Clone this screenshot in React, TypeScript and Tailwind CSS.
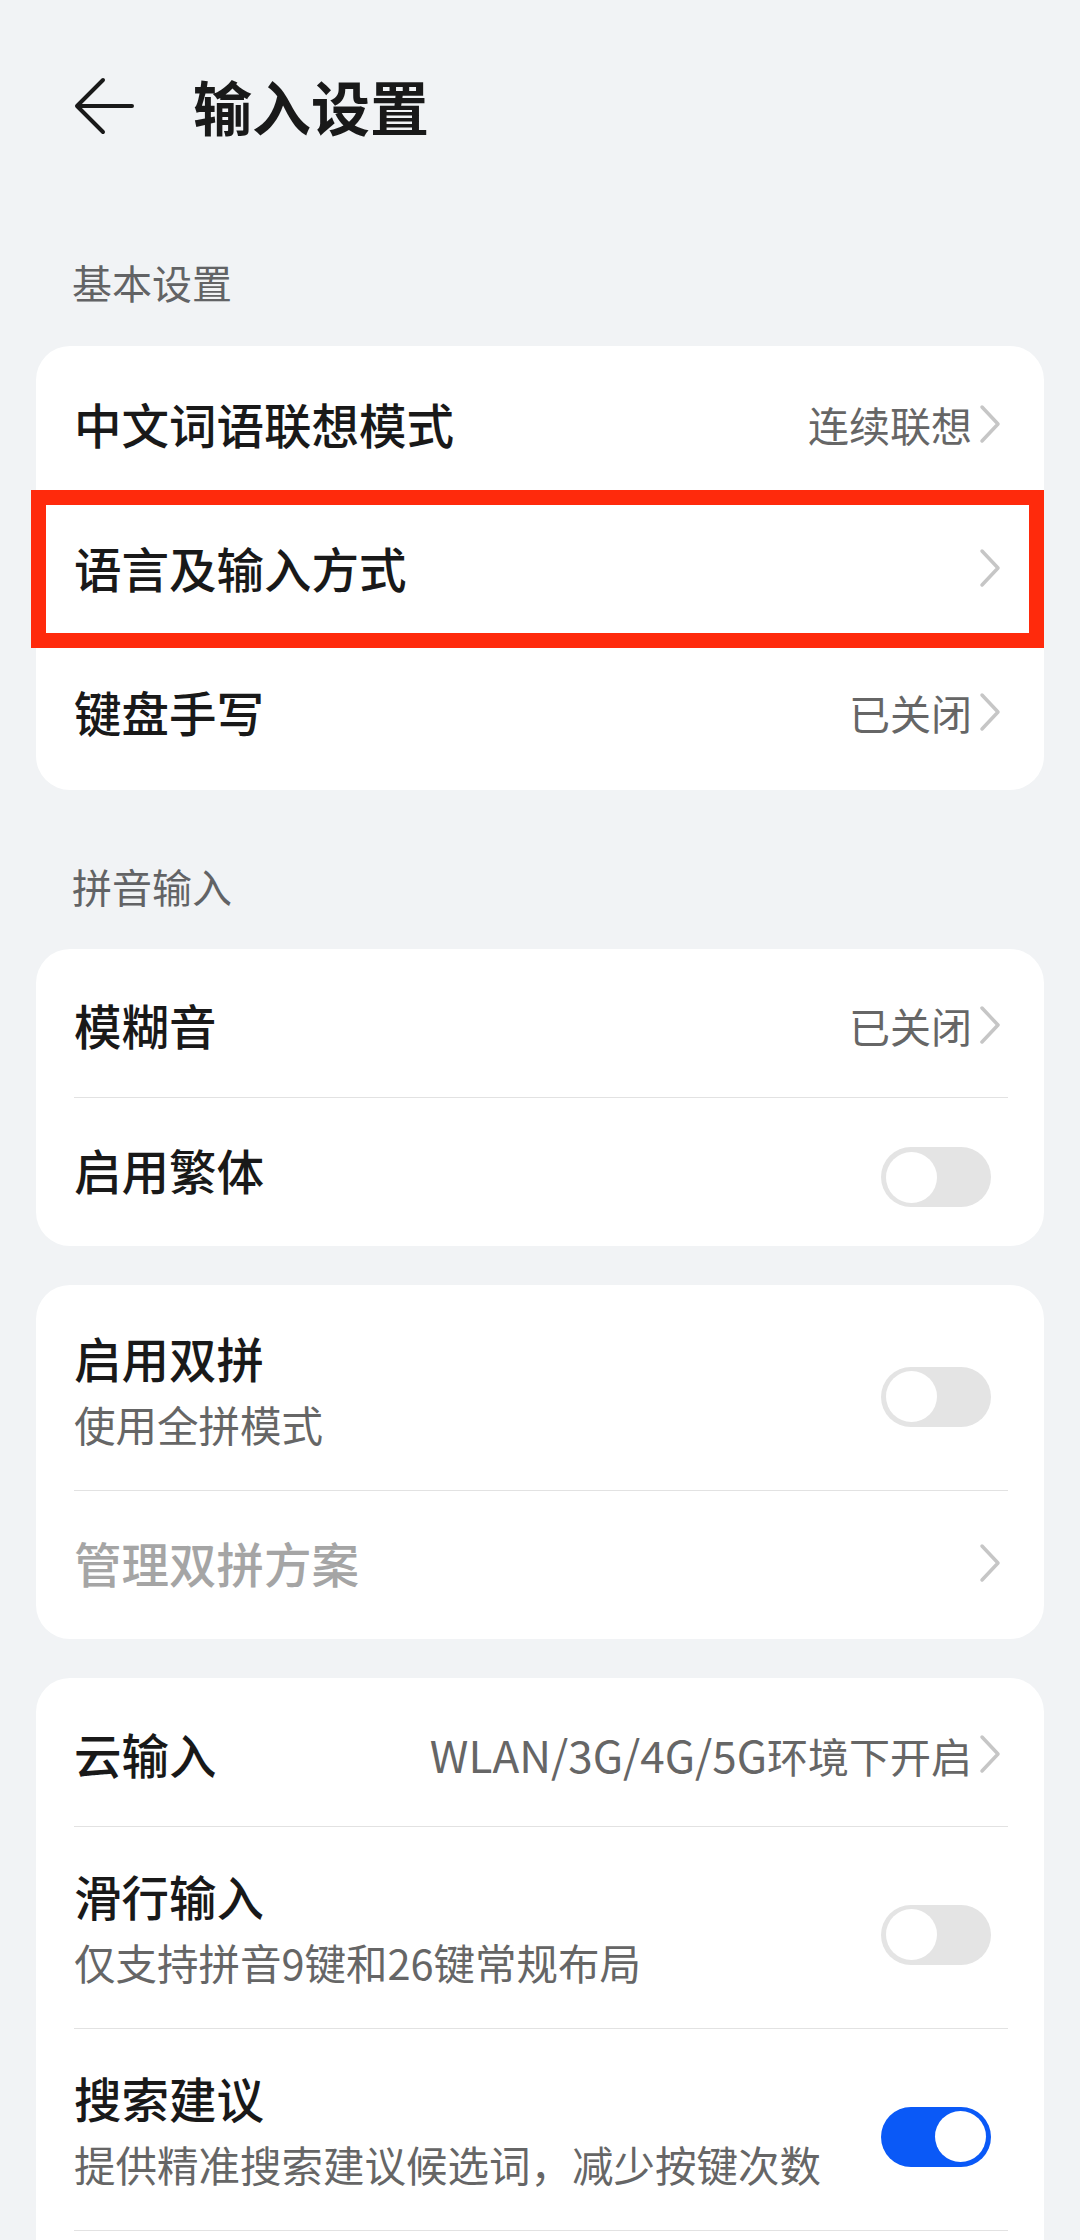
import React from 'react';

/**
 * Input settings screen (输入设置) — HarmonyOS style settings list.
 */

type RowProps = {
    title: string;
    subtitle?: string;
    value?: React.ReactNode;
    chevron?: boolean;
    toggle?: boolean;
    checked?: boolean;
    disabled?: boolean;
    tall?: boolean;
};

function Chevron() {
    return (
        <svg width="24" height="40" viewBox="0 0 24 40" className="mr-[6px] shrink-0" fill="none">
            <polyline points="4,3 20,20 4,37" stroke="#c6c6c6" strokeWidth="3.5" strokeLinecap="round" strokeLinejoin="round" />
        </svg>
    );
}

function Toggle({ checked }: { checked?: boolean }) {
    return (
        <div
            className={`mr-[17px] mt-[14px] flex h-[60px] w-[110px] shrink-0 items-center rounded-full px-[5px] ${checked ? 'justify-end bg-[#0a59f7]' : 'justify-start bg-[#e4e4e4]'}`}
        >
            <div className="h-[51px] w-[51px] rounded-full bg-white" />
        </div>
    );
}

function Row({ title, subtitle, value, chevron, toggle, checked, disabled, tall }: RowProps) {
    return (
        <div className={`flex items-center justify-between ${tall ? 'h-[201px]' : 'h-[144px]'}`}>
            <div className="flex min-w-0 flex-col">
                <span className={`text-[47.5px] font-medium leading-[56px] ${disabled ? 'text-[#a5a5a5]' : 'text-[#191919]'}`}>
                    {title}
                </span>
                {subtitle && (
                    <span className="mt-[13px] text-[41.5px] leading-[50px] text-[#666666]">{subtitle}</span>
                )}
            </div>
            <div className="flex shrink-0 items-center">
                {value && <span className="mr-[6px] text-[41px] leading-[48px] text-[#666666]">{value}</span>}
                {chevron && <Chevron />}
                {toggle && <Toggle checked={checked} />}
            </div>
        </div>
    );
}

function Divider() {
    return <div className="h-px bg-[#e2e2e2]" />;
}

function Card({ children }: { children: React.ReactNode }) {
    return <div className="mx-[36px] rounded-[34px] bg-white py-[4px] pl-[38px] pr-[36px]">{children}</div>;
}

export default function App() {
    return (
        <div
            className="min-h-screen w-[1080px] bg-[#f1f3f5] pb-[200px]"
            style={{ fontFamily: '"Noto Sans CJK SC", "Noto Sans", sans-serif' }}
        >
            {/* Header */}
            <div className="flex h-[212px] items-center pl-[72px]">
                <svg width="64" height="64" viewBox="0 0 64 64" fill="none" className="shrink-0">
                    <path d="M6 32 H60 M31 6 L5 32 L31 58" stroke="#191919" strokeWidth="4" strokeLinecap="round" strokeLinejoin="round" />
                </svg>
                <h1 className="ml-[57px] text-[59px] font-bold leading-[64px] text-[#191919]">输入设置</h1>
            </div>

            {/* 基本设置 */}
            <div className="pb-[44px] pl-[72px] pt-[50px] text-[40px] leading-[40px] text-[#626365]">基本设置</div>
            <div className="relative">
                <div className="mx-[36px] rounded-[34px] bg-white py-[6px] pl-[38px] pr-[36px]">
                    <Row title="中文词语联想模式" value="连续联想" chevron />
                    <Row title="语言及输入方式" chevron />
                    <Row title="键盘手写" value="已关闭" chevron />
                </div>
                {/* Highlight box */}
                <div className="absolute left-[31px] top-[144px] h-[158px] w-[1013px] border-[15px] border-[#ff2a0c]" />
            </div>

            {/* 拼音输入 */}
            <div className="pb-[43px] pl-[72px] pt-[76px] text-[40px] leading-[40px] text-[#626365]">拼音输入</div>
            <Card>
                <Row title="模糊音" value="已关闭" chevron />
                <Divider />
                <Row title="启用繁体" toggle />
            </Card>

            <div className="h-[39px]" />
            <Card>
                <Row title="启用双拼" subtitle="使用全拼模式" toggle tall />
                <Divider />
                <Row title="管理双拼方案" chevron disabled />
            </Card>

            <div className="h-[39px]" />
            <Card>
                <Row
                    title="云输入"
                    value={
                        <>
                            <span className="text-[44px]">WLAN/3G/4G/5G</span>环境下开启
                        </>
                    }
                    chevron
                />
                <Divider />
                <Row title="滑行输入" subtitle="仅支持拼音9键和26键常规布局" toggle tall />
                <Divider />
                <Row title="搜索建议" subtitle="提供精准搜索建议候选词，减少按键次数" toggle checked tall />
                <Divider />
                <div className="h-[144px]" />
            </Card>
        </div>
    );
}
